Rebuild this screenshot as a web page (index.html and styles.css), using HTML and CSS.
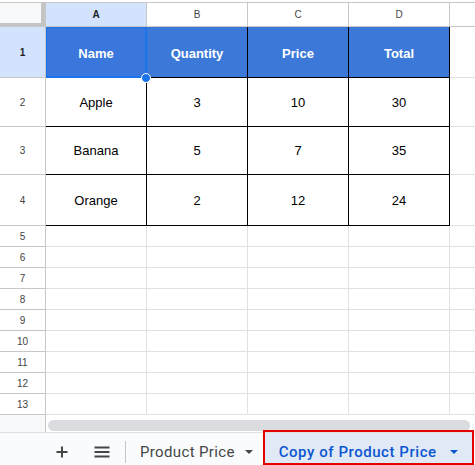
FILE: index.html
```html
<!DOCTYPE html>
<html>
<head>
<meta charset="utf-8">
<link rel="stylesheet" href="styles.css">
</head>
<body>
<div class="topline"></div>
<div class="sheet">
  <div class="hd corner"></div>
  <div class="hd sel">A</div>
  <div class="hd">B</div>
  <div class="hd">C</div>
  <div class="hd">D</div>
  <div class="hd"></div>

  <div class="hd sel">1</div>
  <div class="c th a1">Name</div>
  <div class="c th">Quantity</div>
  <div class="c th">Price</div>
  <div class="c th">Total</div>
  <div class="c"></div>

  <div class="hd">2</div>
  <div class="c td">Apple</div>
  <div class="c td">3</div>
  <div class="c td">10</div>
  <div class="c td">30</div>
  <div class="c"></div>

  <div class="hd">3</div>
  <div class="c td">Banana</div>
  <div class="c td">5</div>
  <div class="c td">7</div>
  <div class="c td">35</div>
  <div class="c"></div>

  <div class="hd">4</div>
  <div class="c td">Orange</div>
  <div class="c td">2</div>
  <div class="c td">12</div>
  <div class="c td">24</div>
  <div class="c"></div>

  <div class="hd">5</div><div class="c"></div><div class="c"></div><div class="c"></div><div class="c"></div><div class="c"></div>
  <div class="hd">6</div><div class="c"></div><div class="c"></div><div class="c"></div><div class="c"></div><div class="c"></div>
  <div class="hd">7</div><div class="c"></div><div class="c"></div><div class="c"></div><div class="c"></div><div class="c"></div>
  <div class="hd">8</div><div class="c"></div><div class="c"></div><div class="c"></div><div class="c"></div><div class="c"></div>
  <div class="hd">9</div><div class="c"></div><div class="c"></div><div class="c"></div><div class="c"></div><div class="c"></div>
  <div class="hd">10</div><div class="c"></div><div class="c"></div><div class="c"></div><div class="c"></div><div class="c"></div>
  <div class="hd">11</div><div class="c"></div><div class="c"></div><div class="c"></div><div class="c"></div><div class="c"></div>
  <div class="hd">12</div><div class="c"></div><div class="c"></div><div class="c"></div><div class="c"></div><div class="c"></div>
  <div class="hd">13</div><div class="c"></div><div class="c"></div><div class="c"></div><div class="c"></div><div class="c"></div>
</div>
<div class="hscroll">
  <div class="hs-rh"></div>
  <div class="hs-track"><div class="thumb"></div></div>
</div>
<div class="tabs">
  <svg class="icon plus" width="24" height="24" viewBox="0 0 24 24"><path d="M12 6.5v11M6.5 12h11" stroke="#444746" stroke-width="2" fill="none"/></svg>
  <svg class="icon menu" width="24" height="24" viewBox="0 0 24 24"><path d="M4.5 7.5h15M4.5 12h15M4.5 16.5h15" stroke="#444746" stroke-width="2" fill="none"/></svg>
  <div class="sep"></div>
  <div class="tab"><span class="tab-name">Product Price</span><span class="caret"></span></div>
  <div class="tab active"><span class="tab-name">Copy of Product Price</span><span class="caret"></span></div>
</div>
</body>
</html>
```
FILE: styles.css
```css
html, body {
  margin: 0;
  padding: 0;
}
body {
  width: 475px;
  height: 465px;
  overflow: hidden;
  background: #fff;
  font-family: Arial, "Liberation Sans", sans-serif;
}
.topline {
  height: 2px;
  border-bottom: 1px solid #c7c7c7;
  background: #fff;
}
.sheet {
  display: grid;
  grid-template-columns: 45px 100px 100px 100px 100px 1fr;
  grid-template-rows: 23px 50px 48px 47px 50px repeat(9, 20px);
  gap: 1px;
  padding-bottom: 1px;
  background: #e1e1e1;
}
.hd {
  position: relative;
  z-index: 2;
  background: #fff;
  outline: 1px solid #c7c7c7;
  color: #444;
  font-size: 10px;
  display: flex;
  align-items: center;
  justify-content: center;
}
.hd.corner {
  background: #f8f9fa;
  box-shadow: inset -4px 0 0 #c4c4c4, inset 0 -3px 0 #c4c4c4;
}
.hd.sel {
  background: #d3e3fd;
  color: #1f1f1f;
  font-weight: bold;
}
.c {
  background: #fff;
  display: flex;
  align-items: center;
  justify-content: center;
  font-size: 13px;
  color: #000;
}
.th {
  background: #3c78d8;
  color: #fff;
  font-weight: bold;
  outline: 1px solid #000;
  padding-top: 2px;
}
.td {
  outline: 1px solid #000;
}
.a1 {
  position: relative;
  z-index: 1;
  background: #3a77dc;
  outline: 2px solid #1a73e8;
  outline-offset: -1px;
}
.a1::after {
  content: "";
  position: absolute;
  right: -5px;
  bottom: -6px;
  width: 8px;
  height: 8px;
  border-radius: 50%;
  background: #1a73e8;
  border: 1px solid #fff;
}
.hscroll {
  display: flex;
  height: 17px;
}
.hs-rh {
  width: 45px;
  background: #f8f9fa;
  border-right: 1px solid #c7c7c7;
}
.hs-track {
  flex: 1;
  background: #fff;
  padding: 5px 5px 1px 2px;
}
.thumb {
  height: 11px;
  border-radius: 6px;
  background: #dadce0;
}
.tabs {
  height: 27px;
  padding-top: 5px;
  border-top: 1px solid #e0e0e0;
  background: #f9fbfd;
  display: flex;
  align-items: center;
  padding-left: 50px;
  font-family: Roboto, "Liberation Sans", sans-serif;
}
.icon {
  flex: none;
  display: block;
}
.menu {
  margin-left: 16px;
}
.sep {
  width: 1px;
  height: 22px;
  background: #c4c7c5;
  margin-left: 11px;
}
.tab {
  display: flex;
  align-items: center;
  margin-left: 14px;
  font-size: 15px;
  color: #444746;
  letter-spacing: 0.35px;
}
.caret {
  width: 0;
  height: 0;
  border-left: 4px solid transparent;
  border-right: 4px solid transparent;
  border-top: 4px solid #444746;
  margin-left: 10px;
}
.tab.active {
  position: relative;
  align-self: stretch;
  margin-top: -5px;
  margin-left: 12px;
  padding-top: 5px;
  padding-left: 14px;
  padding-right: 14px;
  background: #e1e9f7;
  color: #0b57d0;
  font-weight: 500;
  letter-spacing: 0.55px;
}
.tab.active .caret {
  border-top-color: #0b57d0;
  margin-left: 13px;
}
.tab.active::after {
  content: "";
  position: absolute;
  top: -3px;
  left: -2px;
  right: -2px;
  bottom: 0;
  border: 2px solid #e50000;
}
```
